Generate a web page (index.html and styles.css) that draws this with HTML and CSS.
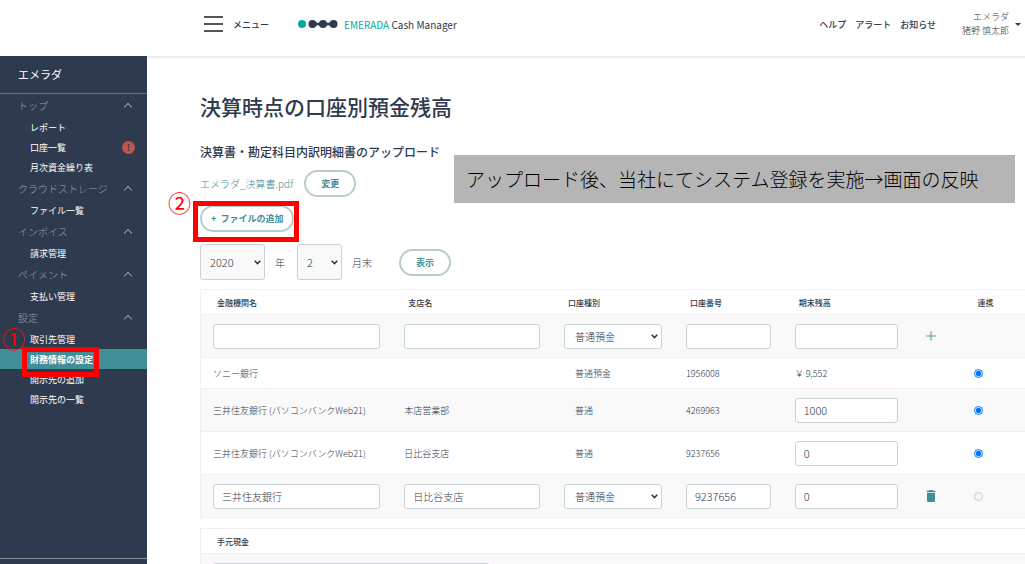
FILE: index.html
```html
<!DOCTYPE html>
<html lang="ja">
<head>
    <meta charset="UTF-8">
    <meta name="viewport" content="width=device-width, initial-scale=1.0">
    <title>EMERADA Cash Manager</title>
    <link rel="stylesheet" href="styles.css">
</head>
<body>
    <header class="header">
        <button class="menu-btn" type="button">
            <span class="hamburger"><i></i><i></i><i></i></span>
            メニュー
        </button>
        <a class="logo" href="#">
            <svg width="40" height="8" viewBox="0 0 40 8" aria-hidden="true">
                <circle cx="4" cy="4" r="4" fill="#00a9a5"/>
                <g fill="#2e3a4d">
                    <circle cx="14.5" cy="4" r="4"/>
                    <circle cx="25" cy="4" r="4"/>
                    <circle cx="35.5" cy="4" r="4"/>
                    <path d="M14.5 1.2Q19.7 4.4 25 1.2Q30.2 4.4 35.5 1.2V6.8Q30.2 3.6 25 6.8Q19.7 3.6 14.5 6.8Z"/>
                </g>
            </svg>
            <span><em>EMERADA</em> Cash Manager</span>
        </a>
        <nav class="header-links">
            <a href="#">ヘルプ</a>
            <a href="#">アラート</a>
            <a href="#">お知らせ</a>
        </nav>
        <button class="user-btn" type="button">
            <span>エメラダ<br>猪野 慎太郎</span>
            <i class="caret"></i>
        </button>
    </header>

    <div class="layout">
        <aside class="sidebar">
            <p class="company">エメラダ</p>
            <nav class="side-nav">
                <button class="group" type="button">トップ<i class="chevron"></i></button>
                <ul>
                    <li><a href="#">レポート</a></li>
                    <li><a href="#">口座一覧</a><span class="alert-badge">!</span></li>
                    <li><a href="#">月次資金繰り表</a></li>
                </ul>
                <button class="group" type="button">クラウドストレージ<i class="chevron"></i></button>
                <ul>
                    <li><a href="#">ファイル一覧</a></li>
                </ul>
                <button class="group" type="button">インボイス<i class="chevron"></i></button>
                <ul>
                    <li><a href="#">請求管理</a></li>
                </ul>
                <button class="group" type="button">ペイメント<i class="chevron"></i></button>
                <ul>
                    <li><a href="#">支払い管理</a></li>
                </ul>
                <button class="group" type="button">設定<i class="chevron"></i></button>
                <ul>
                    <li><a href="#">取引先管理</a></li>
                    <li class="active">
                        <a href="#">財務情報の設定</a>
                        <span class="mark mark-nav"></span>
                        <span class="step step-nav">①</span>
                    </li>
                    <li><a href="#">開示先の追加</a></li>
                    <li><a href="#">開示先の一覧</a></li>
                </ul>
            </nav>
            <div class="side-footer"></div>
        </aside>

        <main class="main">
            <h1>決算時点の口座別預金残高</h1>
            <h2>決算書・勘定科目内訳明細書のアップロード</h2>
            <div class="file-row">
                <a class="file-link" href="#">エメラダ_決算書.pdf</a>
                <button class="pill" type="button">変更</button>
            </div>
            <div class="add-file">
                <button class="pill" type="button">+&nbsp; ファイルの追加</button>
                <span class="mark mark-add"></span>
                <span class="step step-add">②</span>
            </div>
            <div class="note">アップロード後、当社にてシステム登録を実施→画面の反映</div>

            <form class="period">
                <select class="year" id="year"><option>2020</option></select>
                <label for="year">年</label>
                <select class="month" id="month"><option>2</option></select>
                <label for="month">月末</label>
                <button class="pill" type="button">表示</button>
            </form>

            <table class="accounts">
                <colgroup>
                    <col class="c-bank"><col class="c-branch"><col class="c-type"><col class="c-number"><col class="c-balance"><col class="c-action"><col>
                </colgroup>
                <thead>
                    <tr>
                        <th>金融機関名</th>
                        <th>支店名</th>
                        <th>口座種別</th>
                        <th>口座番号</th>
                        <th>期末残高</th>
                        <th></th>
                        <th>連携</th>
                    </tr>
                </thead>
                <tbody>
                    <tr>
                        <td><input type="text" aria-label="金融機関名"></td>
                        <td><input type="text" aria-label="支店名"></td>
                        <td><select aria-label="口座種別"><option>普通預金</option></select></td>
                        <td><input type="text" aria-label="口座番号"></td>
                        <td><input type="text" aria-label="期末残高"></td>
                        <td>
                            <button class="icon-btn" type="button" aria-label="追加">
                                <svg width="10" height="10" viewBox="0 0 10 10"><path d="M5 0V10M0 5H10" stroke="#5b98a1" fill="none"/></svg>
                            </button>
                        </td>
                        <td></td>
                    </tr>
                    <tr class="short">
                        <td>ソニー銀行</td>
                        <td></td>
                        <td class="type">普通預金</td>
                        <td>1956008</td>
                        <td>￥ 9,552</td>
                        <td></td>
                        <td><input type="radio" name="link1" aria-label="連携" checked></td>
                    </tr>
                    <tr>
                        <td>三井住友銀行 (パソコンバンクWeb21)</td>
                        <td>本店営業部</td>
                        <td class="type">普通</td>
                        <td>4269963</td>
                        <td><input class="num" type="text" aria-label="期末残高" value="1000"></td>
                        <td></td>
                        <td><input type="radio" name="link2" aria-label="連携" checked></td>
                    </tr>
                    <tr>
                        <td>三井住友銀行 (パソコンバンクWeb21)</td>
                        <td>日比谷支店</td>
                        <td class="type">普通</td>
                        <td>9237656</td>
                        <td><input class="num" type="text" aria-label="期末残高" value="0"></td>
                        <td></td>
                        <td><input type="radio" name="link3" aria-label="連携" checked></td>
                    </tr>
                    <tr>
                        <td><input type="text" aria-label="金融機関名" value="三井住友銀行"></td>
                        <td><input type="text" aria-label="支店名" value="日比谷支店"></td>
                        <td><select aria-label="口座種別"><option>普通預金</option></select></td>
                        <td><input class="num" type="text" aria-label="口座番号" value="9237656"></td>
                        <td><input class="num" type="text" aria-label="期末残高" value="0"></td>
                        <td>
                            <button class="icon-btn" type="button" aria-label="削除">
                                <svg width="10" height="12" viewBox="0 0 10 12"><path d="M3.5 0H6.5L7.2 .8H9.5V2H.5V.8H2.8ZM1 2.8H9V10.8Q9 12 7.8 12H2.2Q1 12 1 10.8Z" fill="#418e98"/></svg>
                            </button>
                        </td>
                        <td><input type="radio" name="link4" aria-label="連携" disabled></td>
                    </tr>
                </tbody>
            </table>

            <table class="accounts cash">
                <thead>
                    <tr><th>手元現金</th></tr>
                </thead>
                <tbody>
                    <tr><td><input class="cash-input" type="text" aria-label="手元現金"></td></tr>
                </tbody>
            </table>
        </main>
    </div>
</body>
</html>
```
FILE: styles.css
```css
* {
    box-sizing: border-box;
}
body {
    margin: 0;
    height: 100vh;
    display: flex;
    flex-direction: column;
    overflow: hidden;
    font-family: "Noto Sans CJK JP", sans-serif;
    font-size: 9px;
    color: #2e3a4d;
    background-color: #fff;
}
button, input, select {
    font-family: inherit;
    color: inherit;
}
button {
    background: none;
    border: none;
    padding: 0;
    cursor: pointer;
}
a {
    color: inherit;
    text-decoration: none;
}
h1, h2, p, ul {
    margin: 0;
    padding: 0;
}

/* header */
.header {
    flex: none;
    height: 56px;
    display: flex;
    align-items: center;
    padding: 0 4px 8px 204px;
}
.menu-btn {
    display: flex;
    align-items: center;
    gap: 10px;
    font-size: 9px;
    font-weight: 500;
}
.hamburger {
    width: 19px;
    display: flex;
    flex-direction: column;
    gap: 5px;
}
.hamburger i {
    height: 2px;
    background-color: #555;
}
.logo {
    display: flex;
    align-items: center;
    gap: 6px;
    margin-left: 29px;
    font-size: 10px;
}
.logo em {
    font-style: normal;
    color: #00a9a5;
}
.header-links {
    display: flex;
    gap: 9px;
    margin-left: auto;
    font-weight: 500;
}
.user-btn {
    display: flex;
    align-items: center;
    gap: 6px;
    margin-left: 26px;
    font-size: 9px;
    font-weight: 300;
    line-height: 14px;
    text-align: right;
}
.caret {
    border: 3px solid transparent;
    border-top-color: #2e3a4d;
    border-bottom: none;
}

.layout {
    flex: 1;
    min-height: 0;
    display: flex;
}

/* sidebar */
.sidebar {
    flex: none;
    width: 147px;
    display: flex;
    flex-direction: column;
    background-color: #2e3a4d;
    color: #fff;
}
.company {
    padding: 0 18px;
    line-height: 37px;
    font-size: 11px;
    border-bottom: 1px solid #66717c;
}
.side-nav {
    flex: 1;
}
.group {
    width: 100%;
    height: 23px;
    display: flex;
    align-items: center;
    justify-content: space-between;
    padding: 0 15px 0 18px;
    font-size: 10px;
    font-weight: 300;
    color: #8ea3a6;
}
.chevron {
    width: 6px;
    height: 6px;
    margin: 3px 1px 0 0;
    border-top: 1px solid #8ea3a6;
    border-left: 1px solid #8ea3a6;
    transform: rotate(45deg);
}
.side-nav ul {
    list-style: none;
}
.side-nav li {
    position: relative;
    display: flex;
    align-items: center;
    justify-content: space-between;
    height: 20px;
    padding: 0 12px 0 30px;
}
.side-nav .active {
    background-color: #418e98;
    font-weight: 700;
    z-index: 1;
}
.alert-badge {
    width: 13px;
    height: 13px;
    border-radius: 50%;
    background-color: #c0564a;
    color: #2e3a4d;
    font-weight: 700;
    line-height: 13px;
    text-align: center;
}
.side-footer {
    height: 6px;
    border-top: 1px solid #7f9598;
}

/* red marks and step numbers */
.mark {
    position: absolute;
    border: 5px solid #f00;
}
.mark-nav {
    left: 22px;
    top: -2px;
    width: 77px;
    height: 30px;
}
.mark-add {
    left: -7px;
    top: -4px;
    width: 106px;
    height: 41px;
}
.step {
    position: absolute;
    font-size: 23px;
    font-weight: 400;
    line-height: 20px;
    color: #f00;
}
.step-nav {
    left: 2px;
    top: -21px;
}
.step-add {
    left: -32px;
    top: -13px;
}

/* main */
.main {
    position: relative;
    flex: 1;
    min-width: 0;
    padding: 32px 0 0 53px;
    border-top: 2px solid #eee;
    overflow: hidden;
}
h1 {
    font-size: 21px;
    font-weight: 500;
    line-height: 32px;
}
h2 {
    margin-top: 21px;
    font-size: 12px;
    font-weight: 500;
    line-height: 18px;
}
.pill {
    height: 27px;
    padding: 0 15px;
    border: 2px solid #b9cbce;
    border-radius: 14px;
    background-color: #fff;
    font-size: 9px;
    font-weight: 700;
    color: #418e98;
}
.file-row {
    display: flex;
    align-items: center;
    gap: 11px;
    margin-top: 9px;
}
.file-link {
    font-size: 10px;
    font-weight: 300;
    color: #418e98;
}
.add-file {
    position: relative;
    width: max-content;
    margin-top: 8px;
}
.add-file .pill {
    display: block;
    padding: 0 9px;
}
.note {
    position: absolute;
    top: 97px;
    right: 10px;
    width: 561px;
    padding: 0 12px;
    background-color: #b5b5b5;
    color: #000;
    font-size: 19px;
    font-weight: 300;
    line-height: 48px;
    white-space: nowrap;
}
.period {
    display: flex;
    align-items: center;
    gap: 10px;
    margin-top: 12px;
    font-size: 10px;
    font-weight: 300;
}
select {
    appearance: none;
    background: #fff url("data:image/svg+xml,%3Csvg xmlns='http://www.w3.org/2000/svg' width='7' height='5'%3E%3Cpath d='M.7.8 3.5 3.6 6.3.8' fill='none' stroke='%23333' stroke-width='1.5'/%3E%3C/svg%3E") no-repeat right 3px center;
}
.period select {
    height: 36px;
    padding: 0 0 0 9px;
    font-size: 11px;
    background-color: #f9f9f9;
}
.period .year {
    width: 65px;
}
.period .month {
    width: 45px;
    margin-left: 2px;
}
.period .pill {
    margin-left: 17px;
}
select, input[type="text"] {
    border: 1px solid #c5d3d5;
    border-radius: 3px;
    font-weight: 300;
}

/* tables */
.accounts {
    width: 100%;
    margin-top: 9px;
    table-layout: fixed;
    border-collapse: separate;
    border-spacing: 0;
    border: 1px solid #f0f0f0;
    border-width: 1px 0 0 1px;
}
.c-bank { width: 23.2%; }
.c-branch { width: 19.4%; }
.c-type { width: 14.8%; }
.c-number { width: 13.2%; }
.c-balance { width: 15.4%; }
.c-action { width: 6.3%; }
.accounts th {
    height: 25px;
    padding: 0 16px;
    font-size: 8px;
    font-weight: 500;
    text-align: left;
    border-bottom: 1px solid #f0f0f0;
}
.accounts td {
    height: 43px;
    padding: 0 12px;
    font-weight: 300;
    border-bottom: 1px solid #f0f0f0;
    white-space: nowrap;
}
.accounts .short td {
    height: 31px;
}
.accounts .type {
    padding-left: 23px;
}
.accounts tbody tr:nth-child(odd) {
    background-color: #f9f9f9;
}
.accounts input[type="text"], .accounts select {
    display: block;
    width: 100%;
    height: 25px;
    padding: 0 8px;
    font-size: 10px;
    background-color: #fff;
}
.accounts select {
    padding: 0 0 0 10px;
}
.accounts input[type="text"].num {
    font-size: 11px;
}
.accounts input[type="radio"] {
    display: block;
    width: 9px;
    height: 9px;
    margin: 0;
}
.icon-btn {
    width: 18px;
    height: 18px;
    display: flex;
    align-items: center;
    justify-content: center;
}
.cash {
    margin-top: 10px;
}
.accounts .cash-input {
    max-width: 277px;
}
```
